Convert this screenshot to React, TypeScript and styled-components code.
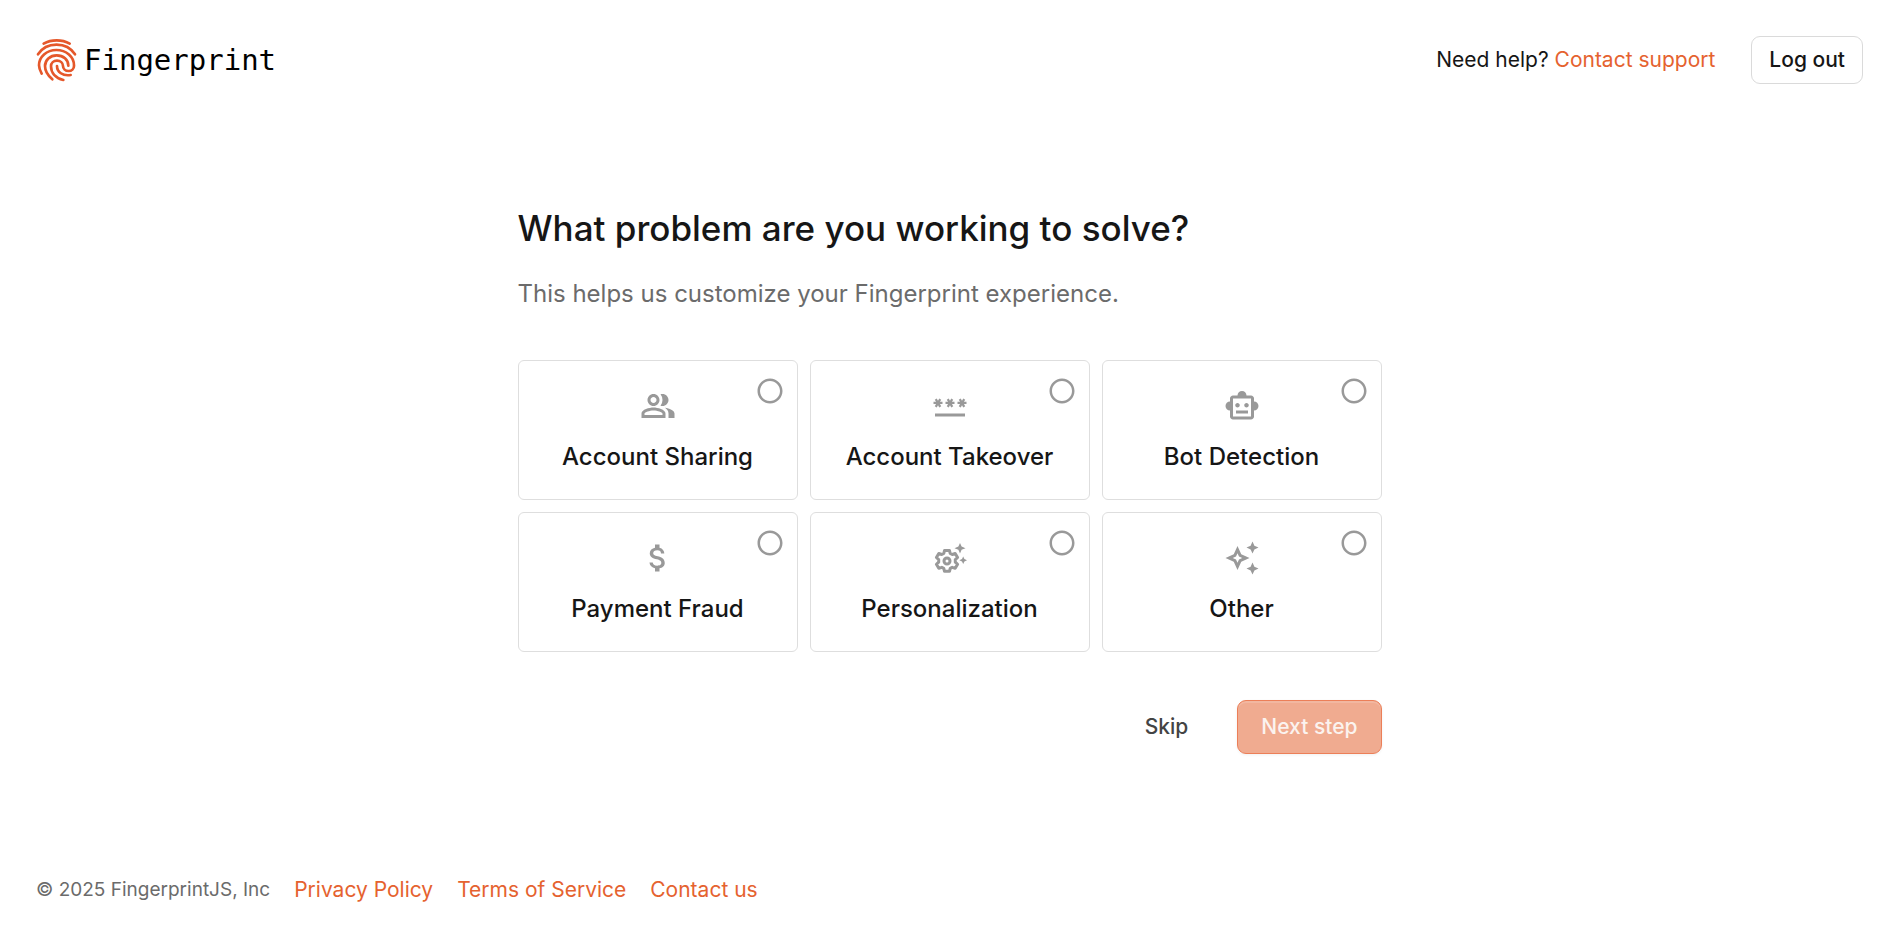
import React, { useState } from "react";
import styled, { createGlobalStyle } from "styled-components";
import {
  MdAttachMoney,
  MdOutlineAutoAwesome,
  MdOutlinePeopleAlt,
  MdOutlineSmartToy,
  MdPassword,
  MdRadioButtonChecked,
  MdRadioButtonUnchecked,
} from "react-icons/md";

const GlobalStyle = createGlobalStyle`
  *, *::before, *::after { box-sizing: border-box; }
  body {
    margin: 0;
    background: #fff;
    color: #161616;
    font-family: Inter, "Liberation Sans", sans-serif;
  }
  button, input { font: inherit; }
`;

const Page = styled.div`
  min-height: 100vh;
  display: flex;
  flex-direction: column;
`;

const Header = styled.header`
  display: flex;
  align-items: center;
  justify-content: space-between;
  padding: 36px;
`;

const Brand = styled.a`
  display: flex;
  align-items: center;
  gap: 7px;
  color: #000;
  text-decoration: none;
  font: 29px/42px "DejaVu Sans Mono", monospace;
`;

const HeaderActions = styled.div`
  display: flex;
  align-items: center;
  gap: 36px;
`;

const Help = styled.p`
  margin: 0;
  font-size: 21px;
  line-height: 30px;
`;

const TextLink = styled.a`
  color: #e5622f;
  text-decoration: none;
  &:hover { text-decoration: underline; }
`;

const Button = styled.button<{ $kind: "outline" | "plain" | "primary" }>`
  height: ${(p) => (p.$kind === "outline" ? 48 : 54)}px;
  padding: 0 ${(p) => ({ outline: 17, plain: 24, primary: 23 })[p.$kind]}px;
  border: 1px solid
    ${(p) => ({ outline: "#dadada", plain: "transparent", primary: "#ec7f58" })[p.$kind]};
  border-radius: 9px;
  background: ${(p) => (p.$kind === "primary" ? "#f0ab90" : "#fff")};
  box-shadow: ${(p) =>
    p.$kind === "primary"
      ? "inset 0 2px 0 rgba(255, 255, 255, 0.15), 0 1px 3px rgba(0, 0, 0, 0.06)"
      : "none"};
  color: ${(p) => ({ outline: "#161616", plain: "#444", primary: "#fbf3ef" })[p.$kind]};
  font-size: 21px;
  font-weight: 500;
  line-height: 30px;
  white-space: nowrap;
  cursor: pointer;
`;

const Main = styled.main`
  width: 100%;
  max-width: 912px;
  margin: 0 auto;
  padding: 84px 24px 0;
  flex: 1;
`;

const Title = styled.h1`
  margin: 0;
  font-size: 35px;
  font-weight: 500;
  line-height: 48px;
`;

const Subtitle = styled.p`
  margin: 24px 0 48px;
  color: #6b6b6b;
  font-size: 24px;
  line-height: 36px;
`;

const Options = styled.div`
  display: grid;
  grid-template-columns: repeat(auto-fit, minmax(260px, 1fr));
  gap: 12px;
`;

const Card = styled.label`
  position: relative;
  display: flex;
  flex-direction: column;
  align-items: center;
  gap: 18px;
  padding: 27px 12px;
  border: 1px solid #dedede;
  border-radius: 6px;
  font-size: 24px;
  font-weight: 500;
  line-height: 30px;
  cursor: pointer;
`;

const CardIcon = styled.span`
  display: block;
  height: 36px;
  color: #999;
  svg { display: block; width: 36px; height: 36px; }
`;

const RadioMark = styled.span<{ $on: boolean }>`
  position: absolute;
  top: 15px;
  right: 12px;
  width: 30px;
  height: 30px;
  color: ${(p) => (p.$on ? "#f04405" : "#999")};
  svg { display: block; width: 30px; height: 30px; }
`;

const Radio = styled.input`
  position: absolute;
  inset: 0;
  width: 100%;
  height: 100%;
  margin: 0;
  opacity: 0;
  cursor: pointer;
`;

const Actions = styled.div`
  display: flex;
  justify-content: flex-end;
  gap: 24px;
  margin-top: 48px;
`;

const Footer = styled.footer`
  display: flex;
  flex-wrap: wrap;
  align-items: center;
  gap: 24px;
  padding: 36px;
  font-size: 21px;
  line-height: 30px;
`;

const Copyright = styled.span`
  color: #6b6b6b;
  font-size: 19px;
`;

function LogoMark() {
  return (
    <svg
      width="41"
      height="44"
      viewBox="0 0 123 132"
      fill="none"
      stroke="#e5582b"
      strokeWidth="8"
      strokeLinecap="round"
      aria-hidden="true"
    >
      <path d="M23 17C46 4 78 4 101 17" />
      <path d="M6 49C31 10 92 10 117 49" />
      <path d="M17 107C12 98 9 90 9 82C9 56 32 36 61 36C91 36 114 56 114 82V84C114 92 107 99 98 99C88 99 81 92 81 84C81 75 73 68 63 68C53 68 45 75 45 85C45 104 58 120 82 126" />
      <path d="M49 124C35 112 27 99 27 84C27 66 42 52 62 52C82 52 97 65 97 83" />
      <path d="M63 84C63 102 80 115 104 111" />
    </svg>
  );
}

function GearSparkIcon() {
  return (
    <svg viewBox="0 0 36 36" fill="none" aria-hidden="true">
      <path
        stroke="currentColor"
        strokeWidth="3"
        strokeLinejoin="round"
        d="M12.5 10.5h5l.7 3 2 1 3-1 2.4 4-2.3 2.1v2.6l2.3 2.1-2.4 4-3-1-2 1-.7 3h-5l-.7-3-2-1-3 1-2.4-4 2.3-2.1v-2.6l-2.3-2.1 2.4-4 3 1 2-1z"
      />
      <circle cx="15" cy="21" r="3" stroke="currentColor" strokeWidth="3" />
      <path
        fill="currentColor"
        d="M28 3l1.600 3.600L33.500 8.200l-3.900 1.600L28 13.500l-1.600-3.700L22.500 8.200l3.900-1.600zM31.200 16.500l1.200 2.600 2.600 1.200-2.600 1.200-1.200 2.600-1.200-2.600-2.600-1.200 2.600-1.200z"
      />
    </svg>
  );
}

const options = [
  { id: "sharing", label: "Account Sharing", icon: <MdOutlinePeopleAlt /> },
  { id: "takeover", label: "Account Takeover", icon: <MdPassword /> },
  { id: "bot", label: "Bot Detection", icon: <MdOutlineSmartToy /> },
  { id: "payment", label: "Payment Fraud", icon: <MdAttachMoney /> },
  { id: "personalization", label: "Personalization", icon: <GearSparkIcon /> },
  { id: "other", label: "Other", icon: <MdOutlineAutoAwesome /> },
];

export default function App() {
  const [selected, setSelected] = useState("");
  return (
    <Page>
      <GlobalStyle />
      <Header>
        <Brand href="#">
          <LogoMark />
          Fingerprint
        </Brand>
        <HeaderActions>
          <Help>
            Need help? <TextLink href="#">Contact support</TextLink>
          </Help>
          <Button type="button" $kind="outline">Log out</Button>
        </HeaderActions>
      </Header>
      <Main>
        <Title>What problem are you working to solve?</Title>
        <Subtitle>This helps us customize your Fingerprint experience.</Subtitle>
        <Options role="radiogroup" aria-label="Problem to solve">
          {options.map((o) => (
            <Card key={o.id}>
              <CardIcon>{o.icon}</CardIcon>
              {o.label}
              <RadioMark $on={selected === o.id}>
                {selected === o.id ? <MdRadioButtonChecked /> : <MdRadioButtonUnchecked />}
                <Radio
                  type="radio"
                  name="problem"
                  value={o.id}
                  checked={selected === o.id}
                  onChange={() => setSelected(o.id)}
                />
              </RadioMark>
            </Card>
          ))}
        </Options>
        <Actions>
          <Button type="button" $kind="plain">Skip</Button>
          <Button type="submit" $kind="primary">Next step</Button>
        </Actions>
      </Main>
      <Footer>
        <Copyright>© 2025 FingerprintJS, Inc</Copyright>
        <TextLink href="#">Privacy Policy</TextLink>
        <TextLink href="#">Terms of Service</TextLink>
        <TextLink href="#">Contact us</TextLink>
      </Footer>
    </Page>
  );
}
